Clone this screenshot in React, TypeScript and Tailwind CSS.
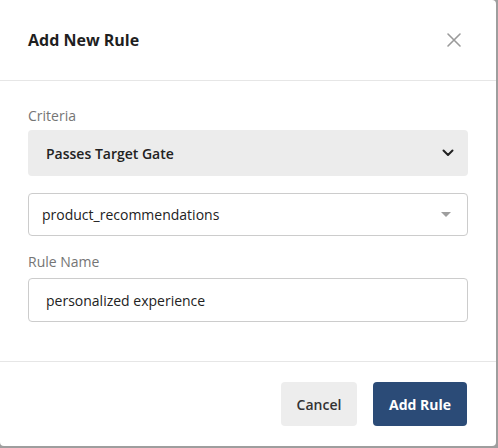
import React from "react";

export default function App() {
  return (
    <div className="w-[498px] h-[448px] bg-[#9e9e9e] overflow-hidden" style={{ fontFamily: '"Open Sans", "Noto Sans", sans-serif' }}>
      <div className="w-[496px] h-[446px] bg-white rounded-r-[4px] rounded-bl-[4px] flex flex-col">
        <div className="h-[81px] flex items-center justify-between pl-[28px] pr-[36px] border-b border-[#e6e6e6] shrink-0">
          <h2 className="text-[16px] font-bold text-[#1f1f1f] leading-none">Add New Rule</h2>
          <svg width="16" height="16" viewBox="0 0 16 16" className="mr-[-2px]">
            <path d="M2 2 L14 14 M14 2 L2 14" stroke="#9a9a9a" strokeWidth="1.6" strokeLinecap="round" />
          </svg>
        </div>
        <div className="flex-1 px-[28px] pt-[25px] flex flex-col">
          <label className="text-[14px] text-[#757575] leading-[20px]">Criteria</label>
          <div className="mt-[4px] h-[46px] w-[440px] bg-[#ececec] rounded-[4px] flex items-center justify-between pl-[18px] pr-[14px]">
            <span className="text-[14px] font-semibold text-[#222]">Passes Target Gate</span>
            <svg width="12" height="8" viewBox="0 0 12 8">
              <path d="M1.5 1.5 L6 6 L10.5 1.5" stroke="#222" strokeWidth="2" fill="none" strokeLinecap="round" strokeLinejoin="round" />
            </svg>
          </div>
          <div className="mt-[17px] h-[43px] w-[440px] border border-[#cccccc] rounded-[4px] flex items-center justify-between pl-[13px] pr-[16px]">
            <span className="text-[14px] text-[#222]">product_recommendations</span>
            <svg width="10" height="6" viewBox="0 0 10 6">
              <path d="M0 0 L10 0 L5 5 Z" fill="#9e9e9e" />
            </svg>
          </div>
          <label className="mt-[16px] text-[14px] text-[#757575] leading-[20px]">Rule Name</label>
          <div className="mt-[6px] h-[44px] w-[440px] border border-[#cccccc] rounded-[4px] flex items-center pl-[17px]">
            <span className="text-[14px] text-[#222]">personalized experience</span>
          </div>
        </div>
        <div className="h-[85px] border-t border-[#e6e6e6] flex items-start justify-end pr-[29px] pt-[20px] gap-[16px] shrink-0">
          <button className="h-[44px] w-[76px] bg-[#ededed] rounded-[4px] text-[14px] font-semibold text-[#333]">Cancel</button>
          <button className="h-[44px] w-[94px] bg-[#2b4b77] rounded-[4px] text-[14px] font-bold text-white">Add Rule</button>
        </div>
      </div>
    </div>
  );
}
